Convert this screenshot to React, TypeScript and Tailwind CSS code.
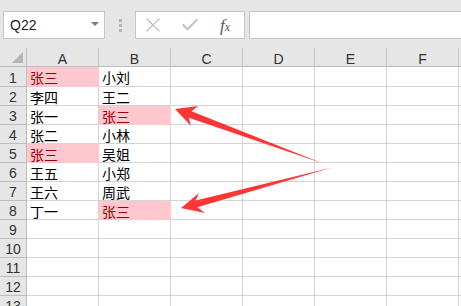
import { Check, X } from "lucide-react"

type Cell = { text: string; hit?: boolean }

const rows: Cell[][] = [
  [{ text: "张三", hit: true }, { text: "小刘" }],
  [{ text: "李四" }, { text: "王二" }],
  [{ text: "张一" }, { text: "张三", hit: true }],
  [{ text: "张二" }, { text: "小林" }],
  [{ text: "张三", hit: true }, { text: "吴姐" }],
  [{ text: "王五" }, { text: "小郑" }],
  [{ text: "王六" }, { text: "周武" }],
  [{ text: "丁一" }, { text: "张三", hit: true }],
  [],
  [],
  [],
  [],
  [],
]

const columns = ["A", "B", "C", "D", "E", "F"]

const cjk = { fontFamily: '"Noto Sans CJK SC", "Noto Sans", sans-serif' }
const latin = { fontFamily: '"Liberation Sans", Arial, sans-serif' }

function FormulaBar() {
  return (
    <div className="flex h-[48px] items-start bg-[#e6e6e6] pt-[11px] pl-[3px]">
      <div className="relative flex h-[28px] w-[102px] items-center border border-[#c6c6c6] bg-white pl-[6px]">
        <span className="text-[14px] text-[#222]" style={latin}>
          Q22
        </span>
        <span className="absolute top-[10px] left-[87px] h-0 w-0 border-x-[4px] border-t-[4px] border-x-transparent border-t-[#7a7a7a]" />
      </div>
      <div className="flex h-[28px] w-[30px] flex-col items-center justify-center gap-[2px]">
        <span className="h-[3px] w-[3px] bg-[#b4b4b4]" />
        <span className="h-[3px] w-[3px] bg-[#b4b4b4]" />
        <span className="h-[3px] w-[3px] bg-[#b4b4b4]" />
      </div>
      <div className="flex h-[28px] w-[110px] items-center border border-[#c6c6c6] bg-white">
        <X className="ml-[5px] h-[24px] w-[24px] text-[#c4c4c4]" strokeWidth={1.4} />
        <Check className="ml-[15px] h-[20px] w-[20px] text-[#c4c4c4]" strokeWidth={2.6} />
        <span
          className="ml-[20px] text-[17px] leading-none text-[#555] italic"
          style={{ fontFamily: '"Liberation Serif", "Times New Roman", serif' }}
        >
          f<span className="text-[12px]">x</span>
        </span>
      </div>
      <div className="ml-[4px] h-[28px] flex-1 border border-r-0 border-[#c6c6c6] bg-white" />
    </div>
  )
}

function HeaderRow() {
  return (
    <div className="flex h-[19px] border-b border-[#bdbdbd] bg-[#e6e6e6]">
      <div className="relative w-[27px] shrink-0 border-r border-[#bdbdbd]">
        <span className="absolute right-[3px] bottom-[3px] h-0 w-0 border-b-[11px] border-l-[11px] border-b-[#b5b5b5] border-l-transparent" />
      </div>
      {columns.map((c) => (
        <div
          key={c}
          className="flex w-[72px] shrink-0 items-center justify-center border-r border-[#c6c6c6] pt-[3px] text-[14px] leading-none text-[#333]"
          style={latin}
        >
          {c}
        </div>
      ))}
      <div className="flex-1" />
    </div>
  )
}

function GridRow({ index, cells }: { index: number; cells: Cell[] }) {
  const height = index === 0 ? "h-[20px]" : "h-[19px]"
  return (
    <div className={`flex ${height} shrink-0`}>
      <div
        className="flex w-[27px] shrink-0 items-center justify-center border-r border-b border-[#bdbdbd] bg-[#e6e6e6] pt-[2px] text-[14px] leading-none text-[#333]"
        style={latin}
      >
        {index + 1}
      </div>
      {columns.map((c, i) => {
        const cell = cells[i]
        return (
          <div
            key={c}
            className={`flex w-[72px] shrink-0 items-center border-r border-b pl-[3px] pt-[1px] text-[14px] leading-none ${
              cell?.hit
                ? "border-[#ffc7ce] bg-[#ffc7ce] text-[#9c0006]"
                : "border-[#d4d4d4] bg-white text-black"
            }`}
            style={cjk}
          >
            {cell?.text}
          </div>
        )
      })}
      <div className="flex-1 border-b border-[#d4d4d4] bg-white" />
    </div>
  )
}

function Arrows() {
  return (
    <svg
      className="pointer-events-none absolute top-0 left-0"
      width="461"
      height="306"
      viewBox="0 0 461 306"
    >
      <polygon
        points="175,109 198,106 191.5,111.2 323,163.5 188.8,117.8 191,126"
        fill="#ff3636"
      />
      <polygon
        points="181,208 199,193 195.6,200.5 332,167.5 197.4,207.3 205,213"
        fill="#ff3636"
      />
    </svg>
  )
}

export default function App() {
  return (
    <div className="relative h-[306px] w-[461px] overflow-hidden bg-white">
      <FormulaBar />
      <HeaderRow />
      {rows.map((cells, i) => (
        <GridRow key={i} index={i} cells={cells} />
      ))}
      <Arrows />
    </div>
  )
}
